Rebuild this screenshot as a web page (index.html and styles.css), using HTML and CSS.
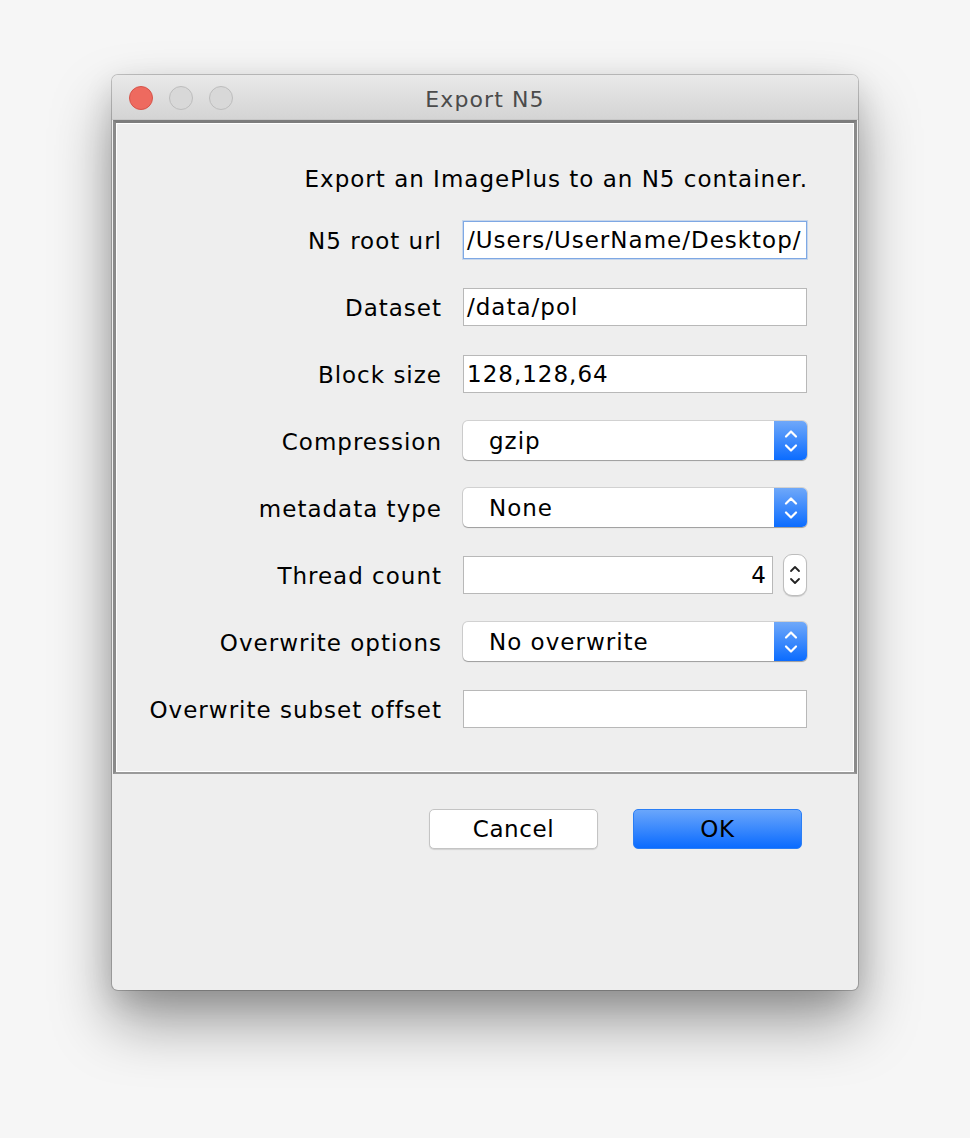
FILE: index.html
```html
<!DOCTYPE html>
<html>
<head>
<meta charset="utf-8">
<title>Export N5</title>
<link rel="stylesheet" href="styles.css">
</head>
<body>
<div class="window">
  <div class="titlebar">
    <div class="lights">
      <span class="light red"></span>
      <span class="light"></span>
      <span class="light"></span>
    </div>
    <div class="title">Export N5</div>
  </div>
  <div class="panel">
    <div class="form">
      <div class="intro">Export an ImagePlus to an N5 container.</div>
      <label class="lbl">N5 root url</label>
      <div class="field focused"><span class="val">/Users/UserName/Desktop/</span></div>
      <label class="lbl">Dataset</label>
      <div class="field"><span class="val">/data/pol</span></div>
      <label class="lbl">Block size</label>
      <div class="field"><span class="val">128,128,64</span></div>
      <label class="lbl">Compression</label>
      <div class="combo"><span class="ctext">gzip</span><span class="arrows"><svg width="14" height="26" viewBox="0 0 14 26"><path d="M2 8.5 L7 3.5 L12 8.5 M2 17.5 L7 22.5 L12 17.5" fill="none" stroke="#fff" stroke-width="2.2" stroke-linecap="round" stroke-linejoin="round"/></svg></span></div>
      <label class="lbl">metadata type</label>
      <div class="combo"><span class="ctext">None</span><span class="arrows"><svg width="14" height="26" viewBox="0 0 14 26"><path d="M2 8.5 L7 3.5 L12 8.5 M2 17.5 L7 22.5 L12 17.5" fill="none" stroke="#fff" stroke-width="2.2" stroke-linecap="round" stroke-linejoin="round"/></svg></span></div>
      <label class="lbl">Thread count</label>
      <div class="spinrow">
        <div class="field num"><span class="val">4</span></div>
        <div class="spinner"><svg width="14" height="30" viewBox="0 0 14 30"><path d="M3 11 L7 7 L11 11 M3 19 L7 23 L11 19" fill="none" stroke="#222" stroke-width="1.8" stroke-linecap="round" stroke-linejoin="round"/></svg></div>
      </div>
      <label class="lbl">Overwrite options</label>
      <div class="combo"><span class="ctext">No overwrite</span><span class="arrows"><svg width="14" height="26" viewBox="0 0 14 26"><path d="M2 8.5 L7 3.5 L12 8.5 M2 17.5 L7 22.5 L12 17.5" fill="none" stroke="#fff" stroke-width="2.2" stroke-linecap="round" stroke-linejoin="round"/></svg></span></div>
      <label class="lbl">Overwrite subset offset</label>
      <div class="field"><span class="val"></span></div>
    </div>
  </div>
  <div class="buttons">
    <button class="btn cancel">Cancel</button>
    <button class="btn ok">OK</button>
  </div>
</div>
</body>
</html>
```

FILE: styles.css
```css
* { box-sizing: border-box; }
html, body { margin: 0; padding: 0; }
body {
  width: 970px;
  height: 1138px;
  background: #f6f6f6;
  font-family: "DejaVu Sans", "Liberation Sans", sans-serif;
  letter-spacing: 1px;
  color: #000;
  padding-top: 75px;
  padding-left: 112px;
  overflow: hidden;
}
.window {
  width: 746px;
  height: 915px;
  background: #eeeeee;
  border-radius: 6px;
  box-shadow: 0 0 0 1px rgba(0,0,0,0.2), 0 32px 60px rgba(0,0,0,0.38), 0 10px 30px rgba(0,0,0,0.12);
  display: flex;
  flex-direction: column;
  overflow: hidden;
}
.titlebar {
  height: 45px;
  background: linear-gradient(#e9e9e9, #d4d4d4);
  border-bottom: 1px solid #c8c8c8;
  position: relative;
  display: flex;
  align-items: center;
  justify-content: center;
  flex: none;
}
.lights {
  position: absolute;
  left: 17px;
  top: 11px;
  display: flex;
  gap: 16px;
  letter-spacing: 0;
}
.light {
  width: 24px;
  height: 24px;
  border-radius: 50%;
  background: #d8d8d8;
  border: 1px solid #bdbdbd;
}
.light.red {
  background: #ee6a5f;
  border-color: #d6544a;
}
.title {
  font-size: 22px;
  color: #4b4b4b;
  letter-spacing: 1.1px;
  padding-top: 4px;
}
.panel {
  height: 654px;
  flex: none;
  border-top: 3px solid #7c7c7c;
  border-left: 3px solid #8a8a8a;
  border-right: 3px solid #8a8a8a;
  border-bottom: 2px solid #9a9a9a;
  box-shadow: inset 1px 1px 0 #fff, inset -1px -1px 0 #fff;
  margin: 0 1px;
  padding: 31px 47px 0 0;
}
.form {
  display: grid;
  grid-template-columns: 1fr 344px;
  grid-template-rows: 52px repeat(8, 67px);
  column-gap: 22px;
  align-items: center;
}
.intro {
  grid-column: 1 / 3;
  text-align: right;
  font-size: 23px;
  margin-right: -1px;
  align-self: start;
  padding-top: 12px;
}
.lbl {
  text-align: right;
  font-size: 23px;
  white-space: nowrap;
  margin-right: -1px;
  padding-top: 2px;
}
.field {
  height: 38px;
  background: #fff;
  border: 1px solid #b8b8b8;
  display: flex;
  align-items: center;
  padding: 0 3px;
  font-size: 23px;
  overflow: hidden;
  white-space: nowrap;
}
.field.focused {
  border-color: #7ea8e4;
  box-shadow: 0 0 0 1px rgba(126,168,228,0.35);
}
.field.num {
  flex: 1;
  justify-content: flex-end;
  padding-right: 5px;
}
.spinrow {
  display: flex;
  align-items: center;
  gap: 10px;
}
.spinner {
  width: 24px;
  height: 42px;
  border: 1px solid #bdbdbd;
  border-radius: 9px;
  background: #fff;
  box-shadow: 0 1px 1px rgba(0,0,0,0.15);
  display: flex;
  align-items: center;
  justify-content: center;
}
.combo {
  height: 39px;
  background: #fff;
  border-radius: 5px;
  box-shadow: 0 0 0 1px rgba(0,0,0,0.12), 0 1px 1px rgba(0,0,0,0.25);
  display: flex;
  align-items: center;
  overflow: hidden;
  font-size: 23px;
}
.ctext {
  flex: 1;
  padding-left: 26px;
}
.arrows {
  width: 33px;
  height: 100%;
  background: linear-gradient(#6fa8f9, #0b6cff);
  display: flex;
  align-items: center;
  justify-content: center;
}
.buttons {
  display: flex;
  justify-content: flex-end;
  gap: 35px;
  padding: 35px 56px 0 0;
}
.btn {
  width: 169px;
  height: 40px;
  border-radius: 5px;
  font-family: "DejaVu Sans", "Liberation Sans", sans-serif;
  font-size: 23px;
  letter-spacing: 0.6px;
  color: #000;
  padding: 0;
}
.btn.cancel {
  background: #fff;
  border: 1px solid #c4c4c4;
  box-shadow: 0 1px 1px rgba(0,0,0,0.12);
}
.btn.ok {
  background: linear-gradient(#6aa6fb, #0a6bff);
  border: 1px solid #2a7ef5;
}
```
